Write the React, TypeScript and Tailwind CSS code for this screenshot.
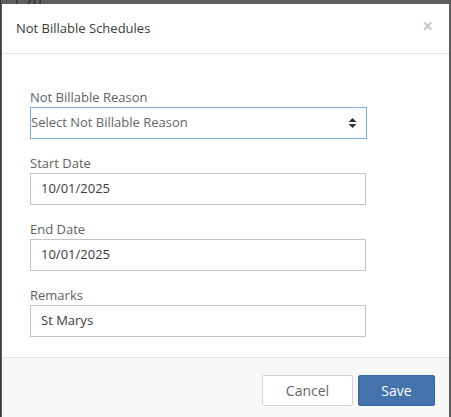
import React from "react";

function SortIcon() {
  return (
    <svg width="9" height="12" viewBox="0 0 9 12" className="block">
      <path d="M4.5 1 L8.5 5 L0.5 5 Z" fill="#333" />
      <path d="M0.5 7 L8.5 7 L4.5 11 Z" fill="#333" />
    </svg>
  );
}

export default function App() {
  const font = { fontFamily: '"Open Sans", "Segoe UI", Arial, sans-serif' };
  return (
    <div
      className="relative w-[451px] h-[417px] overflow-hidden bg-[#5e5e5e] pt-[4px] pl-[2px]"
      style={font}
    >
      <div className="absolute left-[12px] top-[-11px] text-[15px] text-[#2a2a2a]">1.70</div>
      <div className="absolute left-0 top-0 w-[1px] h-full bg-[#3a3a3a]" />
      <div className="relative w-[447px] h-[420px] bg-white flex flex-col">
        <div className="flex items-center justify-between h-[50px] border-b border-[#e5e5e5] pl-[14px] pr-[16px]">
          <h4 className="text-[13px] text-[#3a3a3a] m-0 leading-[20px] mt-[-2px]">Not Billable Schedules</h4>
          <span className="text-[19px] font-bold text-[#c8c8c8] leading-none mt-[-4px]">×</span>
        </div>
        <div className="pl-[28px] pt-[33px] pb-[20px] flex flex-col gap-[14px]">
          <div className="flex flex-col">
            <label className="text-[13px] text-[#5f5f5f] leading-[20px]">Not Billable Reason</label>
            <div className="w-[337px] h-[32px] border border-[#7cabe3] flex items-center justify-between pr-[9px]">
              <span className="text-[13px] text-[#666]">Select Not Billable Reason</span>
              <SortIcon />
            </div>
          </div>
          <div className="flex flex-col">
            <label className="text-[13px] text-[#5f5f5f] leading-[20px]">Start Date</label>
            <div className="w-[336px] h-[32px] border border-[#c4c4c4] flex items-center px-[10px] text-[13px] text-[#3c3c3c]">
              10/01/2025
            </div>
          </div>
          <div className="flex flex-col">
            <label className="text-[13px] text-[#5f5f5f] leading-[20px]">End Date</label>
            <div className="w-[336px] h-[32px] border border-[#c4c4c4] flex items-center px-[10px] text-[13px] text-[#3c3c3c]">
              10/01/2025
            </div>
          </div>
          <div className="flex flex-col">
            <label className="text-[13px] text-[#5f5f5f] leading-[20px]">Remarks</label>
            <div className="w-[336px] h-[32px] border border-[#c4c4c4] flex items-center px-[10px] text-[13px] text-[#3c3c3c]">
              St Marys
            </div>
          </div>
        </div>
        <div className="flex-1 bg-[#f8f8f8] border-t border-[#e3e3e3] flex justify-end items-start pt-[17px] pr-[14px] gap-[5px]">
          <button className="w-[91px] h-[31px] bg-white border border-[#d4d4d4] rounded-[2px] text-[14px] text-[#666]">
            Cancel
          </button>
          <button className="w-[77px] h-[31px] bg-[#4472ac] border border-[#3a66a0] rounded-[2px] text-[14px] text-white">
            Save
          </button>
        </div>
      </div>
    </div>
  );
}
